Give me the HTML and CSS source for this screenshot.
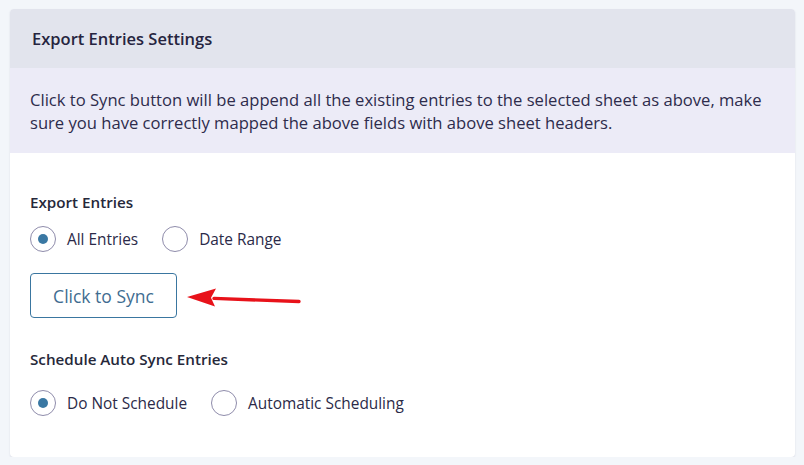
FILE: index.html
```html
<!DOCTYPE html>
<html lang="en">
<head>
  <meta charset="UTF-8" />
  <title>Export Entries Settings</title>
  <link rel="stylesheet" href="styles.css">
</head>
<body>

  <section class="card">
    <div class="card-header">Export Entries Settings</div>

    <div class="card-notice">
      Click to Sync button will be append all the existing entries to the selected sheet as above, make
      sure you have correctly mapped the above fields with above sheet headers.
    </div>

    <div class="card-body">
      <div class="field">
        <div class="field-label">Export Entries</div>
        <div class="radio-group">
          <label class="radio"><span class="radio-dot checked"></span>All Entries</label>
          <label class="radio"><span class="radio-dot"></span>Date Range</label>
        </div>
      </div>

      <div class="sync-row">
        <button class="sync-btn">Click to Sync</button>
        <svg class="arrow" width="116" height="22" viewBox="0 0 116 22">
          <path d="M113 15.5 L28 12.4" stroke="#e8121a" stroke-width="3.4" stroke-linecap="round" fill="none"/>
          <path d="M1 11 L30 2.5 L25 11.8 L29 20.5 Z" fill="#e8121a"/>
        </svg>
      </div>

      <div class="field">
        <div class="field-label">Schedule Auto Sync Entries</div>
        <div class="radio-group spaced">
          <label class="radio"><span class="radio-dot checked"></span>Do Not Schedule</label>
          <label class="radio"><span class="radio-dot"></span>Automatic Scheduling</label>
        </div>
      </div>
    </div>
  </section>

</body>
</html>
```

FILE: styles.css
```css
* {
  margin: 0;
  padding: 0;
  box-sizing: border-box;
  font-family: 'Open Sans', 'Noto Sans', sans-serif;
}

body {
  background-color: #f3f6fa;
  color: #2a2946;
  padding: 9px 9px 0 10px;
}

.card {
  width: 785px;
  height: 448px;
  background-color: #fff;
  border-radius: 4px;
  box-shadow: 0 1px 2px rgba(40, 40, 90, 0.12);
  overflow: hidden;
}

.card-header {
  background-color: #e2e4ed;
  height: 59px;
  padding: 0 22px;
  display: flex;
  align-items: center;
  font-size: 16.5px;
  font-weight: 600;
  color: #26243f;
}

.card-notice {
  background-color: #ecebf7;
  height: 85px;
  padding: 20px 20px 0 20px;
  font-size: 16.6px;
  line-height: 23px;
  color: #2e2c4c;
}

.card-body {
  padding: 38px 20px 0 20px;
}

.field-label {
  font-size: 15.2px;
  font-weight: 600;
  color: #26283a;
  line-height: 22px;
}

.radio-group {
  display: flex;
  gap: 24px;
  margin-top: 13px;
}

.radio-group.spaced {
  margin-top: 20px;
}

.radio {
  display: flex;
  align-items: center;
  gap: 11px;
  font-size: 15.4px;
  color: #2b2a48;
}

.radio-dot {
  width: 26px;
  height: 26px;
  border: 1px solid #8f8cab;
  border-radius: 50%;
  display: flex;
  align-items: center;
  justify-content: center;
  background-color: #fff;
}

.radio-dot.checked::after {
  content: '';
  width: 10px;
  height: 10px;
  border-radius: 50%;
  background-color: #3a78a3;
}

.sync-row {
  display: flex;
  align-items: center;
  margin: 21px 0 30px 0;
}

.sync-btn {
  width: 147px;
  height: 45px;
  background-color: #fff;
  border: 1px solid #3a76a0;
  border-radius: 4px;
  font-size: 17.5px;
  font-weight: 500;
  color: #3f6d91;
  cursor: pointer;
}

.arrow {
  margin-left: 9px;
  margin-top: 2px;
}
```
